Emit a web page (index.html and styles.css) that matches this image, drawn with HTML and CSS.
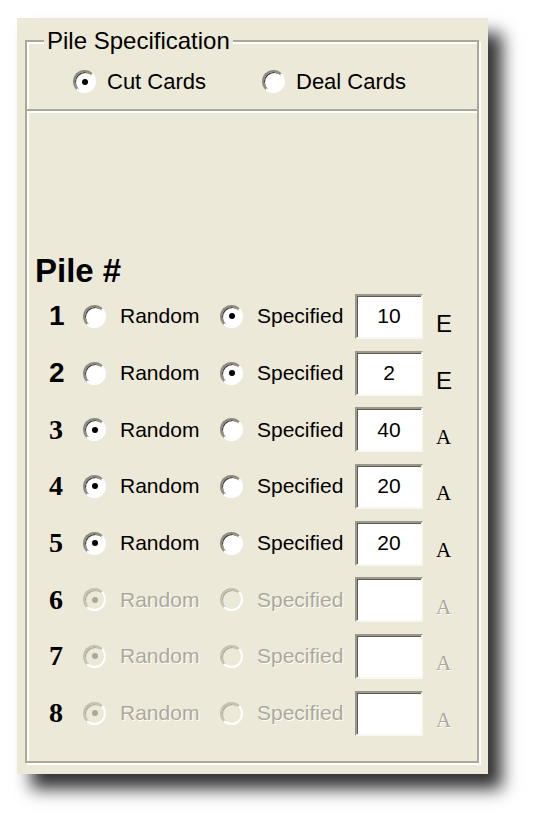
FILE: index.html
```html
<!DOCTYPE html>
<html lang="en">
<head>
    <meta charset="UTF-8">
    <title>Pile Specification</title>
    <link rel="stylesheet" href="styles.css">
</head>
<body>
    <div class="panel">
        <fieldset class="group">
            <legend>Pile Specification</legend>
            <div class="mode">
                <label class="opt"><span class="radio checked"></span>Cut Cards</label>
                <label class="opt"><span class="radio"></span>Deal Cards</label>
            </div>
            <div class="piles">
                <h2>Pile #</h2>

                <div class="row">
                    <span class="num">1</span>
                    <span class="radio"></span><span class="lbl">Random</span>
                    <span class="radio checked"></span><span class="lbl">Specified</span>
                    <span class="box">10</span><span class="unit">E</span>
                </div>
                <div class="row">
                    <span class="num">2</span>
                    <span class="radio"></span><span class="lbl">Random</span>
                    <span class="radio checked"></span><span class="lbl">Specified</span>
                    <span class="box">2</span><span class="unit">E</span>
                </div>
                <div class="row">
                    <span class="num serif">3</span>
                    <span class="radio checked"></span><span class="lbl">Random</span>
                    <span class="radio"></span><span class="lbl">Specified</span>
                    <span class="box">40</span><span class="unit alt">A</span>
                </div>
                <div class="row">
                    <span class="num serif">4</span>
                    <span class="radio checked"></span><span class="lbl">Random</span>
                    <span class="radio"></span><span class="lbl">Specified</span>
                    <span class="box">20</span><span class="unit alt">A</span>
                </div>
                <div class="row">
                    <span class="num serif">5</span>
                    <span class="radio checked"></span><span class="lbl">Random</span>
                    <span class="radio"></span><span class="lbl">Specified</span>
                    <span class="box">20</span><span class="unit alt">A</span>
                </div>
                <div class="row disabled">
                    <span class="num serif">6</span>
                    <span class="radio checked"></span><span class="lbl">Random</span>
                    <span class="radio"></span><span class="lbl">Specified</span>
                    <span class="box"></span><span class="unit alt">A</span>
                </div>
                <div class="row disabled">
                    <span class="num serif">7</span>
                    <span class="radio checked"></span><span class="lbl">Random</span>
                    <span class="radio"></span><span class="lbl">Specified</span>
                    <span class="box"></span><span class="unit alt">A</span>
                </div>
                <div class="row disabled">
                    <span class="num serif">8</span>
                    <span class="radio checked"></span><span class="lbl">Random</span>
                    <span class="radio"></span><span class="lbl">Specified</span>
                    <span class="box"></span><span class="unit alt">A</span>
                </div>
            </div>
        </fieldset>
    </div>
</body>
</html>
```

FILE: styles.css
```css
body {
    margin: 0;
    background: #fff;
    font-family: "Liberation Sans", Arial, sans-serif;
    color: #000;
}
.panel {
    width: 471px;
    height: 756px;
    margin: 18px 0 47px 17px;
    padding: 10px 9px 11px 8px;
    box-sizing: border-box;
    background: #ece9d8;
    box-shadow: 14px 15px 16px rgba(0, 0, 0, 0.8);
    display: flex;
    flex-direction: column;
}
.group {
    flex: 1;
    margin: 0;
    padding: 0;
    min-width: 0;
    border: 2px solid #aca899;
    box-shadow: inset 2px 2px 0 #fff, 2px 2px 0 #fff;
}
.group legend {
    margin-left: 17px;
    padding: 0 3px;
    font-size: 24px;
    line-height: 26px;
    background: #ece9d8;
}
.mode {
    height: 55px;
    display: grid;
    grid-template-columns: 189px auto;
    align-items: center;
    padding-left: 46px;
    border-bottom: 2px solid #aca899;
    box-shadow: 0 2px 0 #fff;
}
.opt {
    display: flex;
    align-items: center;
    gap: 11px;
    font-size: 22px;
}
.radio {
    width: 19px;
    height: 19px;
    border-radius: 50%;
    border: 2px solid;
    border-color: #8d8a7c #fff #fff #8d8a7c;
    background: #fff;
    box-shadow: inset 1px 1px 0 #3c3a33;
    display: grid;
    place-items: center;
    flex-shrink: 0;
}
.radio.checked::after {
    content: "";
    width: 6px;
    height: 6px;
    border-radius: 50%;
    background: #000;
}
.piles {
    padding: 143px 0 0 22px;
}
.piles h2 {
    margin: 0 0 0 -14px;
    font-size: 33px;
    line-height: 34px;
    font-weight: bold;
}
.row {
    height: 56.7px;
    display: grid;
    grid-template-columns: 34px 37px 100px 37px 98px 81px auto;
    align-items: center;
    font-size: 21px;
}
.num {
    font-size: 28px;
    font-weight: bold;
}
.num.serif {
    font-family: "Liberation Serif", "Times New Roman", serif;
}
.box {
    width: 64px;
    height: 41px;
    border: 2px solid;
    border-color: #9b988a #f8f7f1 #f8f7f1 #9b988a;
    box-shadow: inset 1px 1px 0 #5e5c52;
    background: #fff;
    display: flex;
    align-items: center;
    justify-content: center;
}
.unit {
    padding-top: 15px;
    font-size: 24px;
}
.unit.alt {
    font-family: "Liberation Serif", "Times New Roman", serif;
    font-size: 21px;
}
.disabled .lbl,
.disabled .unit {
    color: #aca899;
    text-shadow: 1px 1px 0 #fff;
}
.disabled .radio {
    background: #ece9d8;
    border-color: #c4c1b2 #fff #fff #c4c1b2;
    box-shadow: inset 1px 1px 0 #aca899;
}
.disabled .radio.checked::after {
    background: #aca899;
}
```
